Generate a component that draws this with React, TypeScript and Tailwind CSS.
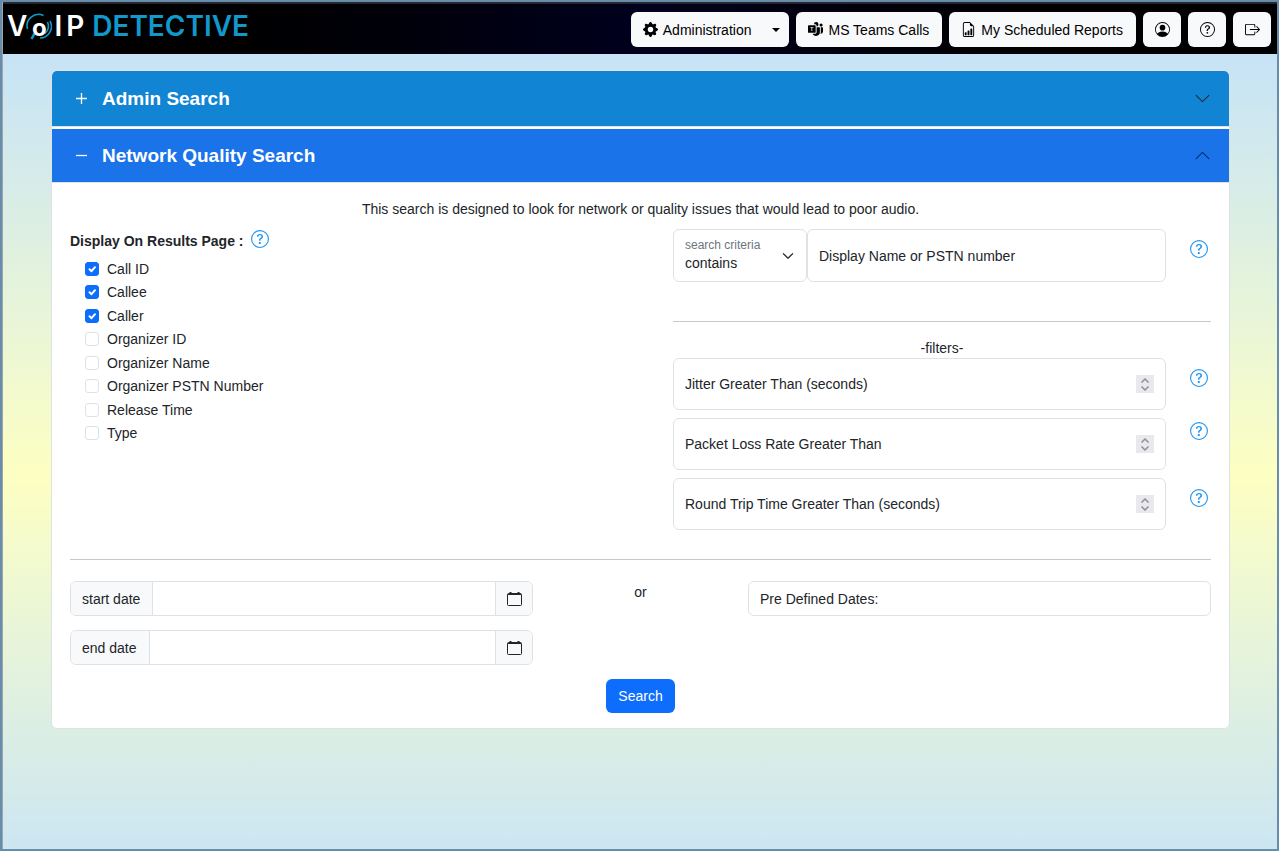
import React, { useState } from 'react';
import type { ReactNode } from 'react';
import {
  BsBoxArrowRight,
  BsChevronDown,
  BsChevronUp,
  BsFileEarmarkBarGraph,
  BsGearFill,
  BsMicrosoftTeams,
  BsPersonCircle,
  BsQuestionCircle
} from 'react-icons/bs';

interface Column {
  id: string;
  label: string;
  checked: boolean;
}

const initialColumns: Column[] = [
  { id: 'callId', label: 'Call ID', checked: true },
  { id: 'callee', label: 'Callee', checked: true },
  { id: 'caller', label: 'Caller', checked: true },
  { id: 'organizerId', label: 'Organizer ID', checked: false },
  { id: 'organizerName', label: 'Organizer Name', checked: false },
  { id: 'organizerPstn', label: 'Organizer PSTN Number', checked: false },
  { id: 'releaseTime', label: 'Release Time', checked: false },
  { id: 'type', label: 'Type', checked: false }
];

const Logo: React.FC = () => (
  <a
    href="#"
    aria-label="VoIP Detective"
    className="flex h-9 items-center pl-1 font-['Inter',sans-serif] text-[28px] leading-none font-semibold text-white"
  >
    <span>V</span>
    <span className="relative flex w-6 justify-center">
      <svg
        viewBox="0 0 26 28"
        className="absolute top-0 -left-px h-7 w-[26px]"
        fill="none"
        stroke="#1199cc"
        strokeWidth="1.6"
        aria-hidden="true"
      >
        <path d="M1.500 17A11.500 11.500 0 0 1 17.500 3.500" />
        <path d="M24 9A11.500 11.500 0 0 1 14 26" />
        <path d="M21.500 10A9.500 9.500 0 0 1 19 21.500" />
        <path d="M8.500 21.500 5.500 27" strokeWidth="2.600" />
      </svg>
      <span className="relative pt-1 text-2xl leading-none font-bold">o</span>
    </span>
    <span className="ml-[3px]">I</span>
    <span className="ml-1">P</span>
    <span className="ml-2 text-[#1199cc]">DETECTIVE</span>
  </a>
);

const NavButton: React.FC<{ children: ReactNode }> = ({ children }) => (
  <button
    type="button"
    className="flex h-[35px] items-center gap-[5px] rounded-md bg-[#f8f9fa] pr-[13px] pl-3 text-black hover:bg-gray-200"
  >
    {children}
  </button>
);

const IconButton: React.FC<{ children: ReactNode; label: string }> = ({ children, label }) => (
  <button
    type="button"
    aria-label={label}
    className="flex h-[35px] w-[38px] items-center justify-center rounded-md bg-[#f8f9fa] text-black hover:bg-gray-200"
  >
    {children}
  </button>
);

const HelpLink: React.FC<{ label: string }> = ({ label }) => (
  <a href="#" aria-label={label} className="block text-[#2196f3]">
    <BsQuestionCircle className="h-[18px] w-[18px]" />
  </a>
);

const AccordionHeader: React.FC<{ title: string; open?: boolean }> = ({ title, open = false }) => (
  <h2>
    <button
      type="button"
      aria-expanded={open}
      className={`flex w-full items-center border-b border-[#dee2e6] pr-[18px] pl-6 text-[19px] font-bold text-white ${
        open ? 'h-[54px] bg-[#1a73e8]' : 'h-14 rounded-t-[5px] bg-[#1184d4]'
      }`}
    >
      <svg viewBox="0 0 12 12" className="h-3 w-3" stroke="currentColor" strokeWidth="1.3" aria-hidden="true">
        <path d={open ? 'M0 5.500H11' : 'M0 5.500H11M5.500 0V11'} />
      </svg>
      <span className="ml-[14px]">{title}</span>
      {open ? (
        <BsChevronUp className="ml-auto h-[17px] w-[17px] text-[#052c65]" />
      ) : (
        <BsChevronDown className="ml-auto h-[17px] w-[17px] text-[#212529]" />
      )}
    </button>
  </h2>
);

const NumberField: React.FC<{ id: string; label: string }> = ({ id, label }) => {
  const [value, setValue] = useState('');
  const step = (by: number) => setValue(String(Number(value) + by));

  return (
    <div className="flex h-[52px] items-center rounded-md border border-[#dee2e6] px-[11px]">
      <label htmlFor={id}>{label}</label>
      <input
        id={id}
        inputMode="decimal"
        value={value}
        onChange={e => setValue(e.target.value)}
        className="min-w-0 flex-1 px-2 outline-none"
      />
      <span className="flex h-[18px] w-[18px] flex-col items-center justify-center gap-[3px] bg-[#e9e9ed] text-[#8f8f9d]">
        <button type="button" aria-label={`Increase ${label}`} onClick={() => step(1)}>
          <svg viewBox="0 0 8 5" className="h-[5px] w-2" fill="none" stroke="currentColor" strokeWidth="1.5">
            <path d="M.5 4.500 4 1l3.500 3.500" />
          </svg>
        </button>
        <button type="button" aria-label={`Decrease ${label}`} onClick={() => step(-1)}>
          <svg viewBox="0 0 8 5" className="h-[5px] w-2" fill="none" stroke="currentColor" strokeWidth="1.5">
            <path d="M.5.5 4 4 7.500.5" />
          </svg>
        </button>
      </span>
    </div>
  );
};

const DateField: React.FC<{ id: string; label: string }> = ({ id, label }) => (
  <div className="flex h-[35px] overflow-hidden rounded-md border border-[#dee2e6]">
    <label htmlFor={id} className="flex items-center border-r border-[#dee2e6] bg-[#f8f9fa] pr-3 pl-[11px]">
      {label}
    </label>
    <input id={id} type="text" className="min-w-0 flex-1 px-3 outline-none" />
    <button
      type="button"
      aria-label={`Pick ${label}`}
      className="flex w-[37px] items-center justify-center border-l border-[#dee2e6] bg-[#f8f9fa]"
    >
      <svg viewBox="0 0 15 14" className="h-[14px] w-[15px]" fill="none" stroke="currentColor" aria-hidden="true">
        <rect x=".5" y="1.500" width="14" height="12" rx="1" />
        <path d="M1 2.500h13M2.500 .5h2M10.500 .5h2" />
      </svg>
    </button>
  </div>
);

const ColumnPicker: React.FC = () => {
  const [columns, setColumns] = useState(initialColumns);

  const toggle = (id: string) =>
    setColumns(prev => prev.map(c => (c.id === id ? { ...c, checked: !c.checked } : c)));

  return (
    <fieldset>
      <legend className="flex items-start gap-[7px] pt-px font-bold">
        Display On Results Page :
        <HelpLink label="Help for result columns" />
      </legend>
      <div className="mt-[6px] ml-[15px] flex h-[186px] flex-col justify-between">
        {columns.map(c => (
          <label key={c.id} className="flex items-center gap-2">
            <span className="grid place-items-center">
              <input
                type="checkbox"
                checked={c.checked}
                onChange={() => toggle(c.id)}
                className="col-start-1 row-start-1 h-[14px] w-[14px] appearance-none rounded-[3px] border border-[#dee2e6] bg-white checked:border-[#0d6efd] checked:bg-[#0d6efd]"
              />
              {c.checked && (
                <svg
                  viewBox="0 0 14 14"
                  className="pointer-events-none col-start-1 row-start-1 h-[14px] w-[14px]"
                  fill="none"
                  stroke="white"
                  strokeWidth="2"
                  strokeLinecap="round"
                  strokeLinejoin="round"
                >
                  <path d="m4.500 7.200 2 2 3.500-4" />
                </svg>
              )}
            </span>
            {c.label}
          </label>
        ))}
      </div>
    </fieldset>
  );
};

const Filters: React.FC = () => (
  <div>
    <div className="grid grid-cols-[1fr_45px]">
      <div className="flex h-[53px]">
        <div className="relative w-[134px] rounded-md border border-[#dee2e6]">
          <label htmlFor="criteria" className="absolute top-1 left-[11px] text-xs leading-[22px] text-[#6c757d]">
            search criteria
          </label>
          <select
            id="criteria"
            className="h-full w-full appearance-none bg-transparent pt-[15px] pl-[11px] outline-none"
          >
            <option>contains</option>
            <option>equals</option>
          </select>
          <BsChevronDown className="pointer-events-none absolute top-5 right-3 h-3 w-3 stroke-1" />
        </div>
        <div className="flex flex-1 items-center rounded-md border border-[#dee2e6] px-[11px]">
          <label htmlFor="displayName">Display Name or PSTN number</label>
          <input id="displayName" type="text" className="min-w-0 flex-1 px-2 outline-none" />
        </div>
      </div>
      <div className="pt-[11px] pl-6">
        <HelpLink label="Help for name search" />
      </div>
    </div>
    <hr className="mt-[39px] border-[#c8c9ca]" />
    <p className="mt-4 text-center leading-5">-filters-</p>
    <div className="grid grid-cols-[1fr_45px] gap-y-2">
      <NumberField id="jitter" label="Jitter Greater Than (seconds)" />
      <div className="pt-[11px] pl-6">
        <HelpLink label="Help for jitter" />
      </div>
      <NumberField id="packetLoss" label="Packet Loss Rate Greater Than" />
      <div className="pt-1 pl-6">
        <HelpLink label="Help for packet loss rate" />
      </div>
      <NumberField id="roundTrip" label="Round Trip Time Greater Than (seconds)" />
      <div className="pt-[11px] pl-6">
        <HelpLink label="Help for round trip time" />
      </div>
    </div>
  </div>
);

const App: React.FC = () => (
  <div className="flex min-h-screen border-2 border-[#668dac] font-['Liberation_Sans',Arial,sans-serif] text-sm leading-[22px] text-[#212529]">
    <div className="flex flex-1 flex-col border-l border-[#a3a3a3]">
      <header className="flex h-[52px] items-start justify-between border-t-2 border-[#26262c] bg-linear-to-r from-black via-[#00001e] to-black pr-[6px]">
        <div className="pt-1">
          <Logo />
        </div>
        <nav className="flex gap-[7px] pt-2">
          <NavButton>
            <BsGearFill className="h-[15px] w-[15px]" />
            Administration
            <span className="-mr-1 ml-4 border-x-4 border-t-4 border-x-transparent border-t-black" />
          </NavButton>
          <NavButton>
            <BsMicrosoftTeams className="h-[15px] w-[15px]" />
            MS Teams Calls
          </NavButton>
          <NavButton>
            <BsFileEarmarkBarGraph className="h-[15px] w-[15px]" />
            My Scheduled Reports
          </NavButton>
          <IconButton label="Account">
            <BsPersonCircle className="h-[15px] w-[15px]" />
          </IconButton>
          <IconButton label="Help">
            <BsQuestionCircle className="h-[15px] w-[15px]" />
          </IconButton>
          <IconButton label="Log out">
            <BsBoxArrowRight className="h-[15px] w-[15px]" />
          </IconButton>
        </nav>
      </header>

      <main className="flex-1 bg-linear-to-b from-[#c6e3f7] via-[#fdffc2] via-53% to-[#cce6f2] pt-4 pr-[47px] pl-12">
        <div className="rounded-md border border-[#dee2e6] bg-white">
          <AccordionHeader title="Admin Search" />
          <div className="mt-[2px]">
            <AccordionHeader title="Network Quality Search" open />
          </div>

          <form className="px-[18px] py-[15px]" onSubmit={e => e.preventDefault()}>
            <p className="text-center">
              This search is designed to look for network or quality issues that would lead to poor audio.
            </p>
            <div className="mt-[9px] grid grid-cols-[603fr_538fr]">
              <ColumnPicker />
              <Filters />
            </div>

            <hr className="mt-[29px] border-[#c8c9ca]" />

            <div className="mt-[21px] grid grid-cols-[463fr_215fr_463fr]">
              <div className="flex flex-col gap-[14px]">
                <DateField id="startDate" label="start date" />
                <DateField id="endDate" label="end date" />
              </div>
              <span className="text-center">or</span>
              <div>
                <select
                  aria-label="Pre Defined Dates"
                  className="h-[35px] w-full appearance-none rounded-md border border-[#dee2e6] bg-white px-[11px] outline-none"
                >
                  <option>Pre Defined Dates:</option>
                </select>
              </div>
            </div>

            <div className="mt-[14px] text-center">
              <button type="submit" className="h-[34px] rounded-md bg-[#0d6efd] px-3 text-white hover:bg-blue-700">
                Search
              </button>
            </div>
          </form>
        </div>
      </main>
    </div>
  </div>
);

export default App;
